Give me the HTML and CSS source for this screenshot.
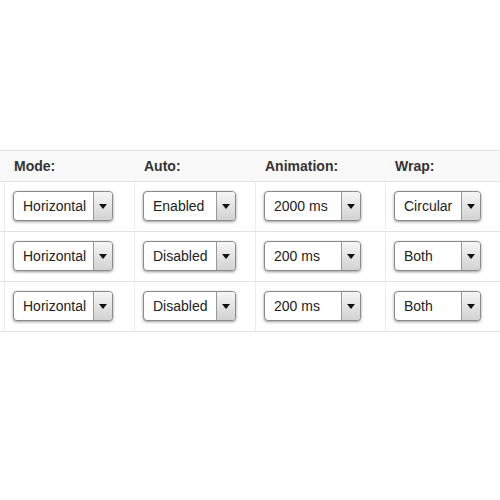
FILE: index.html
```html
<!DOCTYPE html>
<html>
<head>
<meta charset="utf-8">
<link rel="stylesheet" href="styles.css">
</head>
<body>
<div class="grid">
  <div class="row head">
    <div class="cell gutter"></div>
    <div class="cell">Mode:</div>
    <div class="cell">Auto:</div>
    <div class="cell">Animation:</div>
    <div class="cell">Wrap:</div>
  </div>
  <div class="row">
    <div class="cell gutter"></div>
    <div class="cell"><span class="select w-mode"><span class="val">Horizontal</span><span class="btn"><i class="tri"></i></span></span></div>
    <div class="cell"><span class="select w-auto"><span class="val">Enabled</span><span class="btn"><i class="tri"></i></span></span></div>
    <div class="cell"><span class="select w-anim"><span class="val">2000 ms</span><span class="btn"><i class="tri"></i></span></span></div>
    <div class="cell"><span class="select w-wrap"><span class="val">Circular</span><span class="btn"><i class="tri"></i></span></span></div>
  </div>
  <div class="row">
    <div class="cell gutter"></div>
    <div class="cell"><span class="select w-mode"><span class="val">Horizontal</span><span class="btn"><i class="tri"></i></span></span></div>
    <div class="cell"><span class="select w-auto"><span class="val">Disabled</span><span class="btn"><i class="tri"></i></span></span></div>
    <div class="cell"><span class="select w-anim"><span class="val">200 ms</span><span class="btn"><i class="tri"></i></span></span></div>
    <div class="cell"><span class="select w-wrap"><span class="val">Both</span><span class="btn"><i class="tri"></i></span></span></div>
  </div>
  <div class="row">
    <div class="cell gutter"></div>
    <div class="cell"><span class="select w-mode"><span class="val">Horizontal</span><span class="btn"><i class="tri"></i></span></span></div>
    <div class="cell"><span class="select w-auto"><span class="val">Disabled</span><span class="btn"><i class="tri"></i></span></span></div>
    <div class="cell"><span class="select w-anim"><span class="val">200 ms</span><span class="btn"><i class="tri"></i></span></span></div>
    <div class="cell"><span class="select w-wrap"><span class="val">Both</span><span class="btn"><i class="tri"></i></span></span></div>
  </div>
</div>
</body>
</html>
```
FILE: styles.css
```css
html, body {
  margin: 0;
  padding: 0;
  background: #ffffff;
}
body {
  padding-top: 150px;
  font-family: "Liberation Sans", Arial, sans-serif;
  font-size: 14px;
  color: #222;
}
.grid {
  border-top: 1px solid #e2e2e2;
}
.row {
  display: grid;
  grid-template-columns: 4px 130px 121px 130px 1fr;
  height: 50px;
  border-bottom: 1px solid #e2e2e2;
  box-sizing: border-box;
}
.row.head {
  height: 31px;
  background: #f9f9f9;
  font-weight: bold;
  color: #333;
}
.cell {
  display: flex;
  align-items: center;
  padding-left: 8px;
  border-left: 1px solid #ececec;
  box-sizing: border-box;
  min-width: 0;
}
.head .cell {
  border-left-color: transparent;
  padding-left: 9px;
}
.cell.gutter {
  border-left: none;
  padding: 0;
}
.select {
  display: flex;
  height: 30px;
  box-sizing: border-box;
  border: 1px solid #8a8a8a;
  border-radius: 4px;
  background: #fff;
  box-shadow: 0 1px 3px rgba(0, 0, 0, 0.4);
  overflow: hidden;
  margin-top: -1px;
}
.val {
  flex: 1;
  display: flex;
  align-items: center;
  padding-left: 9px;
  color: #222;
  white-space: nowrap;
}
.btn {
  width: 18px;
  border-left: 1px solid #999;
  background: linear-gradient(#f6f6f6, #d2d2d2);
  display: flex;
  align-items: center;
  justify-content: center;
}
.tri {
  width: 0;
  height: 0;
  border-left: 4px solid transparent;
  border-right: 4px solid transparent;
  border-top: 5px solid #111;
  margin-top: 1px;
}
.w-mode { width: 100px; }
.w-auto { width: 93px; }
.w-anim { width: 97px; }
.w-wrap { width: 87px; }
```
